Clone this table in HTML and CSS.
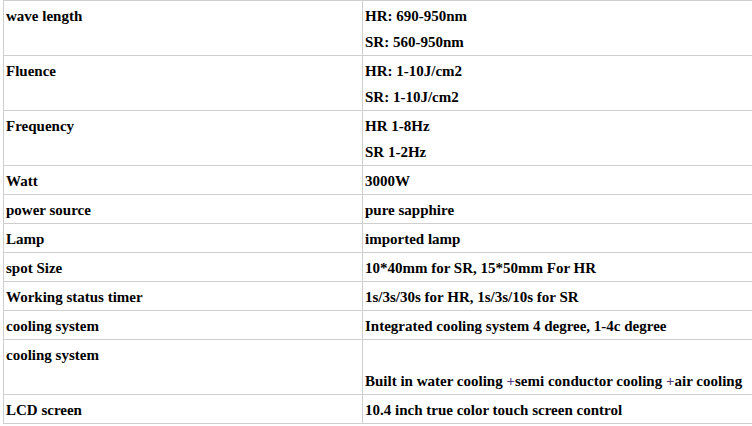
FILE: index.html
```html
<!DOCTYPE html>
<html>
<head>
<meta charset="utf-8">
<link rel="stylesheet" href="styles.css">
</head>
<body>
<table class="spec">
  <colgroup><col class="c1"><col class="c2"></colgroup>
  <tr><td>wave length</td><td>HR: 690-950nm<br>SR: 560-950nm</td></tr>
  <tr><td>Fluence</td><td>HR: 1-10J/cm2<br>SR: 1-10J/cm2</td></tr>
  <tr><td>Frequency</td><td>HR 1-8Hz<br>SR 1-2Hz</td></tr>
  <tr><td>Watt</td><td>3000W</td></tr>
  <tr><td>power source</td><td>pure sapphire</td></tr>
  <tr><td>Lamp</td><td>imported lamp</td></tr>
  <tr><td>spot Size</td><td>10*40mm for SR, 15*50mm For HR</td></tr>
  <tr><td>Working status timer</td><td>1s/3s/30s for HR, 1s/3s/10s for SR</td></tr>
  <tr><td>cooling system</td><td>Integrated cooling system 4 degree, 1-4c degree</td></tr>
  <tr><td>cooling system</td><td><br>Built in water cooling <span class="plus">+</span>semi conductor cooling <span class="plus">+</span>air cooling</td></tr>
  <tr><td>LCD screen</td><td>10.4 inch true color touch screen control</td></tr>
</table>
</body>
</html>
```
FILE: styles.css
```css
html, body {
  margin: 0;
  padding: 0;
  background: #ffffff;
  overflow: hidden;
}
body {
  font-family: "Liberation Serif", "Times New Roman", serif;
  font-weight: bold;
  font-size: 15px;
  color: #000;
}
.spec {
  border-collapse: collapse;
  margin-left: 3px;
  width: 780px;
  table-layout: fixed;
}
.c1 { width: 359px; }
.c2 { width: 421px; }
.spec td {
  border: 1px solid #cfcfcf;
  padding: 2px 2px 0;
  line-height: 26px;
  vertical-align: top;
  white-space: nowrap;
}
.plus {
  color: #4f3a7a;
}
```
